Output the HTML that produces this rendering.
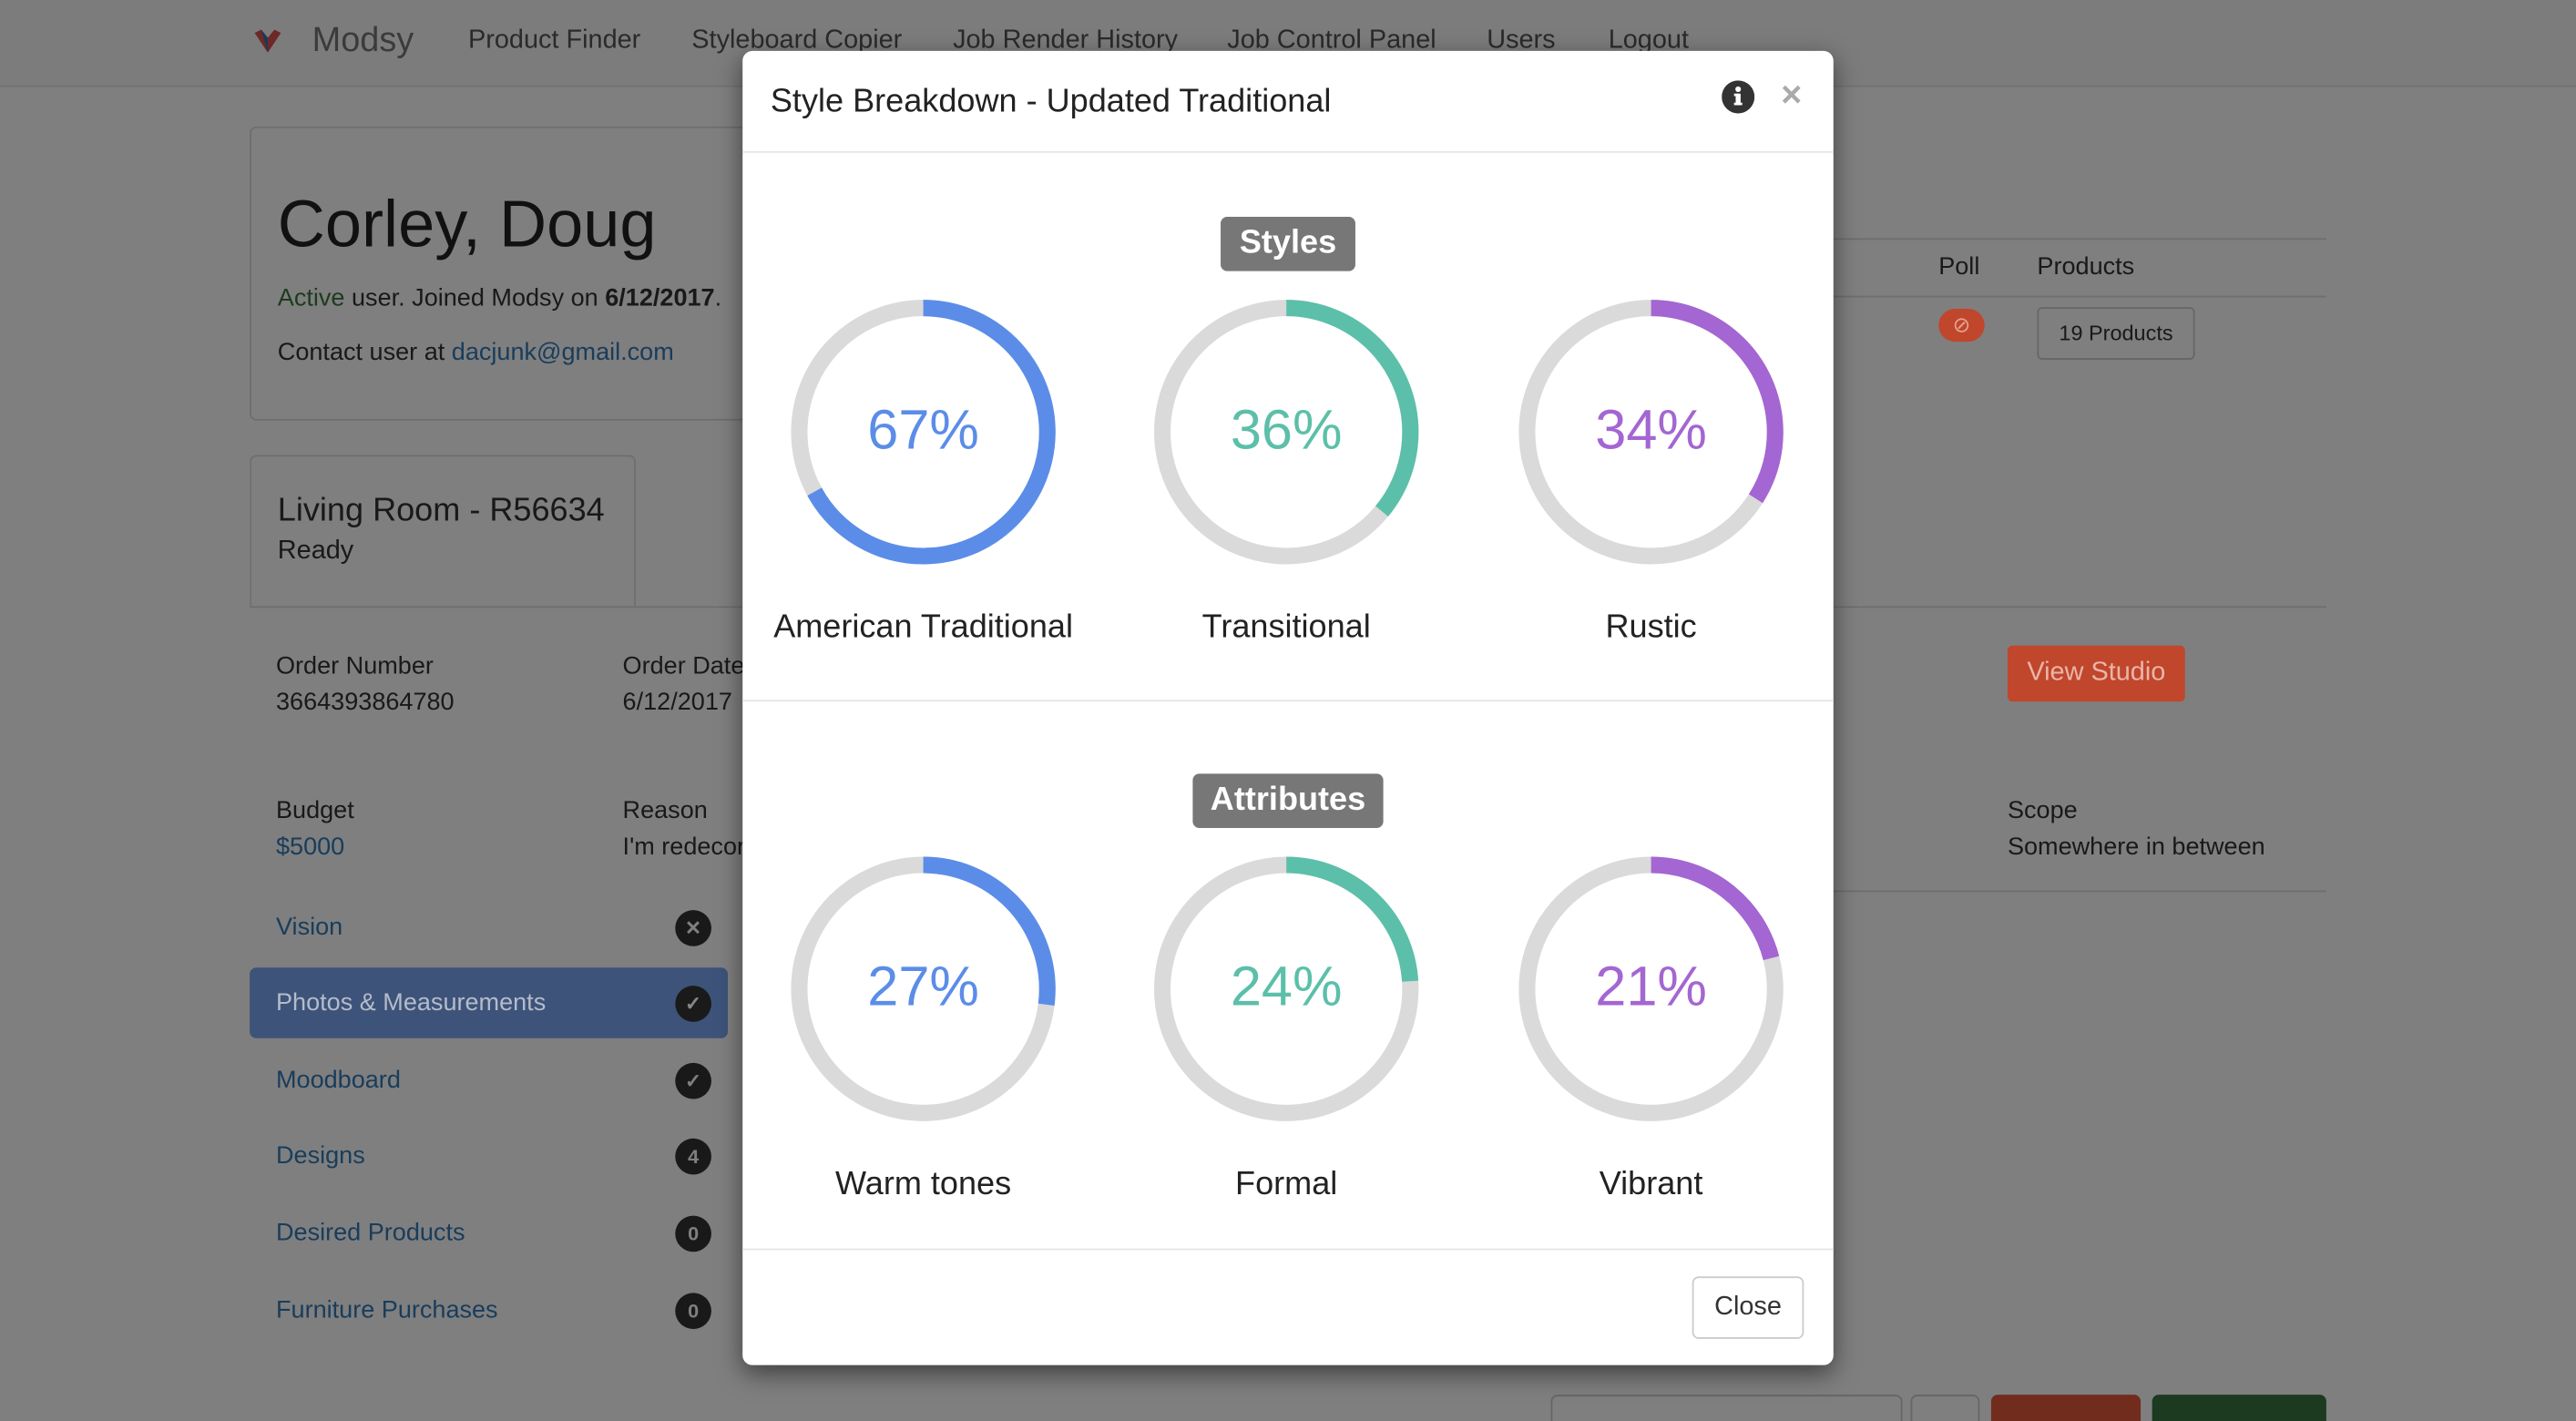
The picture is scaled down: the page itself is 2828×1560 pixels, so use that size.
<!DOCTYPE html>
<html><head><meta charset="utf-8"><style>
html,body{margin:0;padding:0;width:2828px;height:1560px;overflow:hidden;background:#808080}
#s{position:absolute;left:0;top:0;width:1568px;height:865px;overflow:hidden;transform:scale(1.80357,1.80347);transform-origin:0 0;font-family:"Liberation Sans",Helvetica,Arial,sans-serif;color:#333;font-size:15px;background:#fff}
.a{position:absolute;white-space:nowrap}
.nav{position:absolute;left:0;top:0;width:1568px;height:52px;background:#f8f8f8;border-bottom:1px solid #e7e7e7}
.nav span{position:absolute;top:16px;font-size:16px;color:#555}
.lk{color:#337ab7}
.badge{position:absolute;left:411px;width:22px;height:22px;border-radius:11px;background:#333;color:#fff;font-size:12px;font-weight:bold;text-align:center;line-height:22px}
.ov{position:absolute;left:0;top:0;width:1568px;height:900px;background:rgba(0,0,0,.5)}
.m{position:absolute;left:452px;top:31px;width:664px;height:800px;background:#fff;border-radius:6px;box-shadow:0 5px 15px rgba(0,0,0,.5)}
.lbl{position:absolute;font-size:20px;color:#222;text-align:center;width:220px}
.tag{position:absolute;background:#777;color:#fff;font-weight:bold;font-size:20px;height:33px;line-height:33px;text-align:center;border-radius:4px}
</style></head><body><div id="s">
<div class="nav">
<svg style="position:absolute;left:153px;top:15px" width="20" height="20" viewBox="0 0 20 20"><path d="M2 5 L10 17 L18 5 L14 3 L10 8 L6 3Z" fill="#d9534f"/><path d="M6 3 L10 8 L10 17Z" fill="#3a6fb0"/></svg>
<span style="left:190px;top:13px;font-size:21px;color:#777">Modsy</span>
<span style="left:285px">Product Finder</span><span style="left:421px">Styleboard Copier</span><span style="left:580px">Job Render History</span><span style="left:747px">Job Control Panel</span><span style="left:905px">Users</span><span style="left:979px">Logout</span>
</div>
<div class="a" style="left:152px;top:77px;width:310px;height:177px;border:1px solid #ddd;border-radius:4px"></div>
<div class="a" style="left:169px;top:115px;font-size:40px;color:#222">Corley, Doug</div>
<div class="a" style="left:169px;top:173px;font-size:15px"><span style="color:#3c763d">Active</span> user. Joined Modsy on <b>6/12/2017</b>.</div>
<div class="a" style="left:169px;top:206px;font-size:15px">Contact user at <span class="lk">dacjunk@gmail.com</span></div>
<div class="a" style="left:152px;top:277px;width:233px;height:92px;border:1px solid #ddd;border-bottom:none;border-radius:4px 4px 0 0;background:#fff"></div>
<div class="a" style="left:152px;top:369px;width:1264px;border-top:1px solid #ddd"></div>
<div class="a" style="left:169px;top:300px;font-size:20px">Living Room - R56634</div>
<div class="a" style="left:169px;top:327px;font-size:16px">Ready</div>
<div class="a" style="left:168px;top:395px;line-height:22px">Order Number<br>3664393864780</div>
<div class="a" style="left:379px;top:395px;line-height:22px">Order Date<br>6/12/2017</div>
<div class="a" style="left:168px;top:483px;line-height:22px">Budget<br><span class="lk">$5000</span></div>
<div class="a" style="left:379px;top:483px;line-height:22px">Reason<br>I'm redecorating</div>
<div class="a" style="left:1222px;top:483px;line-height:22px">Scope<br>Somewhere in between</div>
<div class="a" style="left:1116px;top:542px;width:300px;border-top:1px solid #ddd"></div>
<div class="a" style="left:1116px;top:145px;width:300px;border-top:1px solid #ddd"></div>
<div class="a" style="left:1116px;top:180px;width:300px;border-top:1px solid #ddd"></div>
<div class="a" style="left:1180px;top:154px">Poll</div><div class="a" style="left:1240px;top:154px">Products</div>
<div class="a" style="left:1240px;top:187px;width:94px;height:30px;border:1px solid #ccc;border-radius:3px;font-size:13px;text-align:center;line-height:30px">19 Products</div>
<div class="a lk" style="left:168px;top:556px">Vision</div><div class="badge" style="top:554px">✕</div>
<div class="a lk" style="left:168px;top:649px">Moodboard</div><div class="badge" style="top:647px">✓</div>
<div class="a lk" style="left:168px;top:695px">Designs</div><div class="badge" style="top:693px">4</div>
<div class="a lk" style="left:168px;top:742px">Desired Products</div><div class="badge" style="top:740px">0</div>
<div class="a lk" style="left:168px;top:789px">Furniture Purchases</div><div class="badge" style="top:787px">0</div>
<div class="a" style="left:944px;top:849px;width:212px;height:30px;border:1px solid #ccc;border-radius:4px"></div>
<div class="a" style="left:1163px;top:849px;width:40px;height:30px;border:1px solid #ccc;border-radius:4px"></div>
<div class="ov"></div>
<div class="a" style="left:152px;top:589px;width:291px;height:43px;background:#3d5379;border-radius:4px"></div>
<div class="a" style="left:168px;top:602px;color:#aab"><span style="color:#b4bccb">Photos &amp; Measurements</span></div><div class="badge" style="top:600px;background:#1a1a1a;color:#888">✓</div>
<div class="a" style="left:1180px;top:188px;width:28px;height:20px;border-radius:10px;background:#c0462c;color:#e8a090;font-size:13px;text-align:center;line-height:20px">⊘</div>
<div class="a" style="left:1222px;top:393px;width:108px;height:34px;background:#c0462c;border-radius:3px;color:#eab5a8;font-size:16px;text-align:center;line-height:34px">View Studio</div>
<div class="a" style="left:1212px;top:849px;width:91px;height:30px;background:#722c1d;border-radius:4px"></div>
<div class="a" style="left:1310px;top:849px;width:106px;height:30px;background:#1b3a20;border-radius:4px"></div>
<div class="m">
<div class="a" style="left:17px;top:20px;font-size:20px;color:#222">Style Breakdown - Updated Traditional</div>
<svg class="a" style="left:596px;top:18px" width="20" height="20" viewBox="0 0 20 20"><circle cx="10" cy="10" r="10" fill="#333"/><rect x="8.5" y="8" width="3" height="7" fill="#fff"/><circle cx="10" cy="5.3" r="1.7" fill="#fff"/><rect x="7.5" y="13.5" width="5" height="1.5" fill="#fff"/><rect x="7.5" y="8" width="3" height="1.5" fill="#fff"/></svg>
<div class="a" style="left:632px;top:14px;font-size:22px;color:#aaa;font-weight:bold">×</div>
<div class="a" style="left:0;top:61px;width:664px;border-top:1px solid #e5e5e5"></div>
<div class="a" style="left:0;top:395px;width:664px;border-top:1px solid #e5e5e5"></div>
<div class="a" style="left:0;top:729px;width:664px;border-top:1px solid #e5e5e5"></div>
<div class="tag" style="left:291px;top:101px;width:82px">Styles</div>
<div class="tag" style="left:274px;top:440px;width:116px">Attributes</div>
<svg class="a" style="left:0;top:0" width="664" height="720">
<g fill="none" stroke-width="10" stroke="#dadada">
<circle cx="110" cy="232" r="75.5"/><circle cx="331" cy="232" r="75.5"/><circle cx="553" cy="232" r="75.5"/>
<circle cx="110" cy="571" r="75.5"/><circle cx="331" cy="571" r="75.5"/><circle cx="553" cy="571" r="75.5"/>
</g>
<g fill="none" stroke-width="10">
<circle cx="110" cy="232" r="75.5" stroke="#5b8de8" stroke-dasharray="317.8 500" transform="rotate(-90 110 232)"/>
<circle cx="331" cy="232" r="75.5" stroke="#5cbfa9" stroke-dasharray="170.8 500" transform="rotate(-90 331 232)"/>
<circle cx="553" cy="232" r="75.5" stroke="#a466d2" stroke-dasharray="161.3 500" transform="rotate(-90 553 232)"/>
<circle cx="110" cy="571" r="75.5" stroke="#5b8de8" stroke-dasharray="128.1 500" transform="rotate(-90 110 571)"/>
<circle cx="331" cy="571" r="75.5" stroke="#5cbfa9" stroke-dasharray="113.8 500" transform="rotate(-90 331 571)"/>
<circle cx="553" cy="571" r="75.5" stroke="#a466d2" stroke-dasharray="99.6 500" transform="rotate(-90 553 571)"/>
</g>
<g text-anchor="middle" font-family="Liberation Sans, sans-serif" font-size="34">
<text x="110" y="242" fill="#5b8de8">67%</text><text x="331" y="242" fill="#5cbfa9">36%</text><text x="553" y="242" fill="#a466d2">34%</text>
<text x="110" y="581" fill="#5b8de8">27%</text><text x="331" y="581" fill="#5cbfa9">24%</text><text x="553" y="581" fill="#a466d2">21%</text>
</g>
</svg>
<div class="lbl" style="left:0;top:340px">American Traditional</div>
<div class="lbl" style="left:221px;top:340px">Transitional</div>
<div class="lbl" style="left:443px;top:340px">Rustic</div>
<div class="lbl" style="left:0;top:679px">Warm tones</div>
<div class="lbl" style="left:221px;top:679px">Formal</div>
<div class="lbl" style="left:443px;top:679px">Vibrant</div>
<div class="a" style="left:578px;top:746px;width:66px;height:36px;border:1px solid #ccc;border-radius:4px;font-size:16px;text-align:center;line-height:36px;color:#333">Close</div>
</div>
</div></body></html>
